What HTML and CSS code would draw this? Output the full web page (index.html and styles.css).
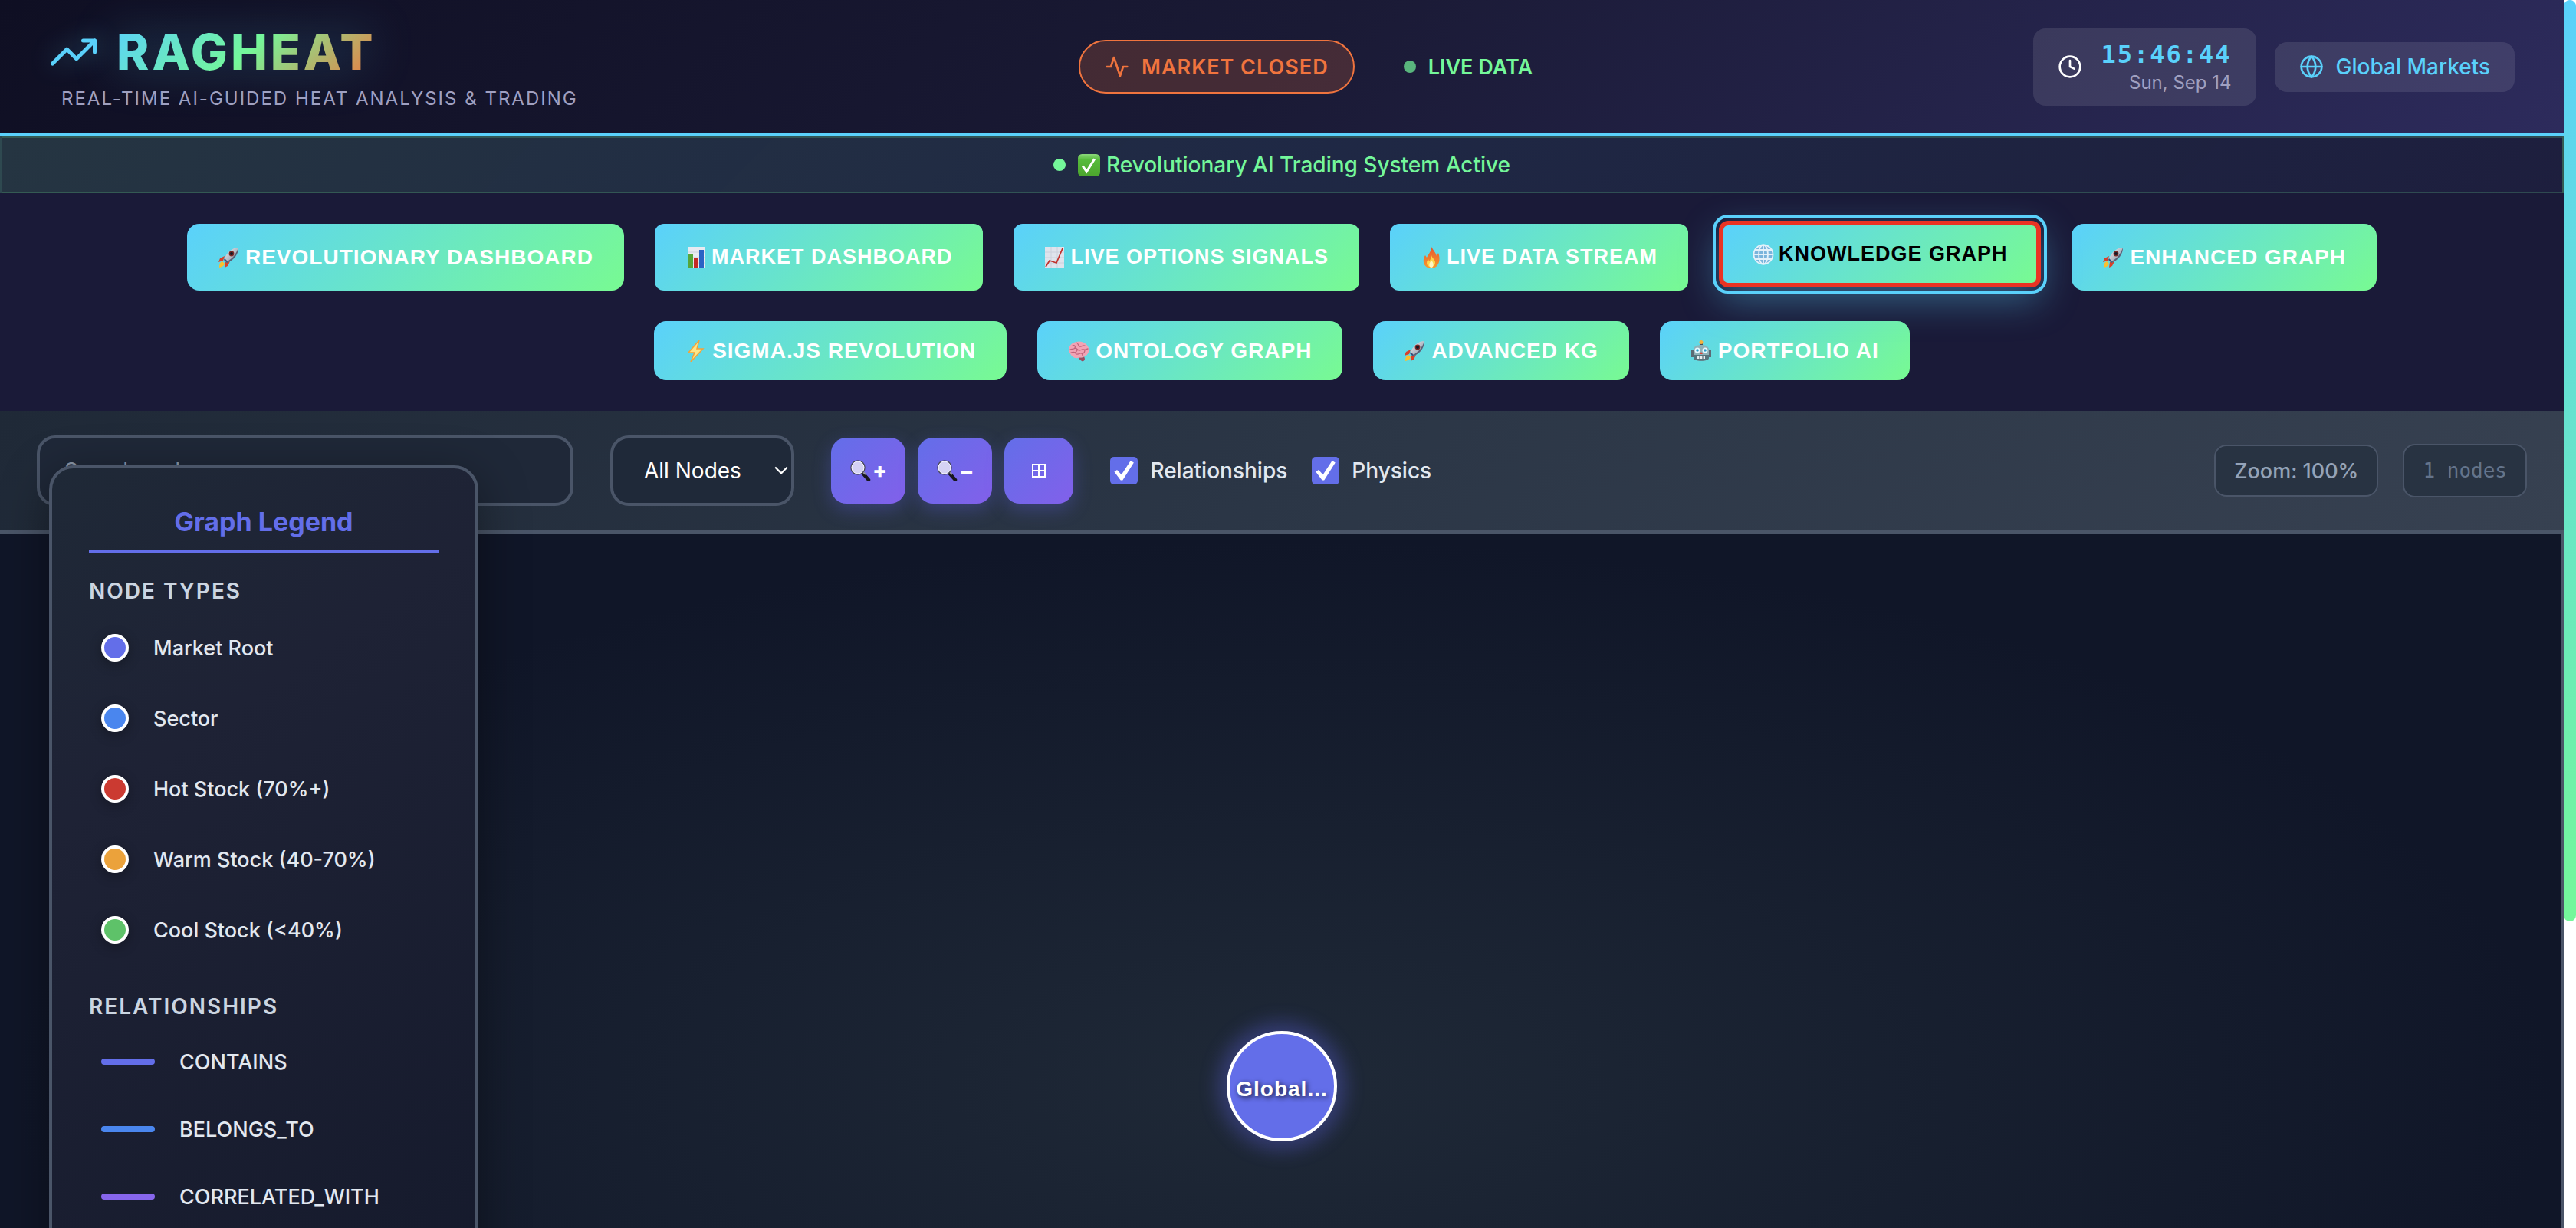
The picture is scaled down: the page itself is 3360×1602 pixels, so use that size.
FILE: index.html
```html
<!DOCTYPE html>
<html lang="en">
<head>
<meta charset="utf-8">
<title>RAGHEAT</title>
<link rel="stylesheet" href="styles.css">
</head>
<body>
<svg class="sprite" aria-hidden="true">
  <linearGradient id="steel" x1="0" y1="0" x2="1" y2="1"><stop offset="0" stop-color="#f4f6fa"/><stop offset="1" stop-color="#7d8797"/></linearGradient>
  <linearGradient id="flame" x1="0" y1="0" x2="0" y2="1"><stop offset="0" stop-color="#e8552b"/><stop offset="1" stop-color="#f79a2d"/></linearGradient>
  <linearGradient id="leaf" x1="0" y1="0" x2="0" y2="1"><stop offset="0" stop-color="#8bd87a"/><stop offset=".25" stop-color="#57bb3c"/><stop offset="1" stop-color="#4ca52d"/></linearGradient>
  <symbol id="rocket" viewBox="0 0 28 28"><path d="M9 12 3 15l-2 5 6-2zM16 19l-3 6-4 2 1-7z" fill="#d8402a"/><path d="M6 19c-3 1-4 4-4 8 4-1 6-2 7-5z" fill="#fbc02d"/><path d="M27 1c-8 0-15 6-19 16l4 4C22 17 27 9 27 1z" fill="url(#steel)"/><path d="M8 17l4 4 2-1-5-5z" fill="#37507c"/><path d="M27 1c0 8-5 16-15 20l-1-1C20 15 24 9 27 1z" fill="#56637a"/><circle cx="18" cy="9" r="3.4" fill="#7a2a26"/><circle cx="18" cy="9" r="2" fill="#151a28"/></symbol>
  <symbol id="bars" viewBox="0 0 28 28"><path d="M3 0h22v28H3z" fill="#e7eaf1"/><path d="M3 7h22M3 14h22M3 21h22" stroke="#cdd2de"/><path d="M4 10h6v18H4z" fill="#56a63a"/><path d="M11 15h6v13h-6z" fill="#c42a25"/><path d="M18 4h6v24h-6z" fill="#2a63c4"/></symbol>
  <symbol id="trend" viewBox="0 0 28 28"><path d="M1 0h25v28H1z" fill="#dfe3ec"/><path d="M1 7h25M1 14h25M1 21h25M9 0v28M17 0v28" stroke="#cbd0dc"/><path d="m2 26 5-8 9 3 8-19" fill="none" stroke="#c1322d" stroke-width="1.8"/></symbol>
  <symbol id="fire" viewBox="0 0 28 28"><path d="M14 0c3 5 6 8 7 12l2-4c4 10 0 20-9 20S1 19 6 11l2 3c2-4 6-8 6-14z" fill="url(#flame)"/><path d="M14 11c1 4 6 6 5 11s-11 6-11-1c0-2 1-4 2-5l1 3c2-2 3-5 3-8z" fill="#fdd54a"/><path d="M14 18c4 3 3 9 0 9s-4-5 0-9z" fill="#fff7c2"/></symbol>
  <symbol id="globe" viewBox="0 0 28 28"><circle cx="14" cy="14" r="12.500" fill="#79b4dc"/><g fill="none" stroke="#e3f1fa" stroke-width="1.800"><circle cx="14" cy="14" r="12.500"/><ellipse cx="14" cy="14" rx="6" ry="12.500"/><path d="M14 1v26M1 14h26M3 8h22M3 20h22"/></g></symbol>
  <symbol id="bolt" viewBox="0 0 28 28"><path d="M19 0 5 16h8L8 28l16-17h-8z" fill="#fde68a" stroke="#f2a33a" stroke-width="1.500"/></symbol>
  <symbol id="brain" viewBox="0 0 28 28"><path d="M13 22c3 0 6 1 8-1l1 3c0 2-2 4-4 3-2-1-3-3-5-5z" fill="#9c4a5e"/><path d="M2 16C-1 10 4 3 11 2c7-2 14 2 16 8 1 5-1 9-5 11-3 2-6 1-9 2-5 1-8-2-11-7z" fill="#f0a3b5"/><path d="M6 7c3-1 4 1 3 3s-4 1-6 2M11 3c3 1 2 4 4 5s4-2 7-1M9 10c3 0 3 3 6 3s3-2 6-1 3-1 5-1M4 16c3-1 5-1 6 1s4 1 6 0 3 1 3 3M12 13c-1 2-2 3-3 3M22 12c0 3-1 5-3 5" fill="none" stroke="#c0637b" stroke-width="1.300" stroke-linecap="round"/></symbol>
  <symbol id="robot" viewBox="0 0 28 28"><path d="M12 3h4v4h-4z" fill="#444d59"/><circle cx="14" cy="2.500" r="2.500" fill="#f5b23c"/><path d="M1 13h3v9H1zM24 13h3v9h-3z" fill="#5c6b75"/><path d="M4 12c0-8 20-8 20 0v11c0 5-20 5-20 0z" fill="#8fb2b8"/><path d="M4 19h20v4c0 5-20 5-20 0z" fill="#56747d"/><circle cx="9" cy="13" r="3.500" fill="#e9f8ff"/><circle cx="19" cy="13" r="3.500" fill="#e9f8ff"/><circle cx="9" cy="13" r="1.800" fill="#2b9ec9"/><circle cx="19" cy="13" r="1.800" fill="#2b9ec9"/><path d="m14 15 2 3h-4z" fill="#d6453c"/><path d="M9 21h10v3H9z" fill="#e8eef0"/><path d="M12 21v3M16 21v3" stroke="#39505a"/></symbol>
  <symbol id="lens" viewBox="0 0 28 28"><path d="m17 17 8 9" stroke="#17171c" stroke-width="4.500" stroke-linecap="round"/><path d="m17 15 4 4" stroke="#9a9aa4" stroke-width="2"/><circle cx="11" cy="10" r="9" fill="#d5d2f4" stroke="#4c4c5c" stroke-width="1.500"/><circle cx="11" cy="10" r="8" fill="none" stroke="#f4f4fb"/></symbol>
</svg>

<div class="app">
  <header class="header">
    <div class="brand">
      <h1 class="logo">
        <svg class="logo-icon" viewBox="0 0 24 24"><path d="m23 6-9.500 9.500-5-5L1 18"/><path d="M17 6h6v6"/></svg>
        <span class="logo-text">RAGHEAT</span>
      </h1>
      <p class="tagline">Real-Time AI-Guided Heat Analysis &amp; Trading</p>
    </div>
    <div class="market">
      <div class="market-pill">
        <svg class="line-icon" viewBox="0 0 24 24"><path d="M22 12h-4l-3 9L9 3l-3 9H2"/></svg>
        <span>MARKET CLOSED</span>
      </div>
      <div class="live"><i class="dot dot-dim"></i><span>LIVE DATA</span></div>
    </div>
    <div class="header-right">
      <div class="clock">
        <svg class="line-icon" viewBox="0 0 24 24"><circle cx="12" cy="12" r="10"/><path d="M12 6v6l4 2"/></svg>
        <div class="clock-text"><time class="time">15:46:44</time><span class="date">Sun, Sep 14</span></div>
      </div>
      <div class="region">
        <svg class="line-icon" viewBox="0 0 24 24"><circle cx="12" cy="12" r="10"/><path d="M2 12h20M12 2a15.300 15.300 0 0 1 4 10 15.300 15.300 0 0 1-4 10 15.300 15.300 0 0 1-4-10 15.300 15.300 0 0 1 4-10z"/></svg>
        <span>Global Markets</span>
      </div>
    </div>
  </header>

  <div class="status" role="status">
    <i class="dot"></i>
    <svg class="check" viewBox="0 0 28 28"><rect width="28" height="28" rx="5" fill="url(#leaf)"/><path d="m6 15 5 7L21 6" fill="none" stroke="#fff" stroke-width="3"/></svg>
    <span>Revolutionary AI Trading System Active</span>
  </div>

  <nav class="nav">
    <button class="tab tab-round"><svg class="emoji"><use href="#rocket"/></svg>Revolutionary Dashboard</button>
    <button class="tab"><svg class="emoji"><use href="#bars"/></svg>Market Dashboard</button>
    <button class="tab"><svg class="emoji"><use href="#trend"/></svg>Live Options Signals</button>
    <button class="tab"><svg class="emoji"><use href="#fire"/></svg>Live Data Stream</button>
    <button class="tab tab-active"><svg class="emoji"><use href="#globe"/></svg>Knowledge Graph</button>
    <button class="tab tab-round"><svg class="emoji"><use href="#rocket"/></svg>Enhanced Graph</button>
    <button class="tab tab-round"><svg class="emoji"><use href="#bolt"/></svg>Sigma.js Revolution</button>
    <button class="tab tab-round"><svg class="emoji"><use href="#brain"/></svg>Ontology Graph</button>
    <button class="tab tab-round"><svg class="emoji"><use href="#rocket"/></svg>Advanced KG</button>
    <button class="tab tab-round"><svg class="emoji"><use href="#robot"/></svg>Portfolio AI</button>
  </nav>

  <main class="graph">
    <div class="toolbar">
      <input class="search" type="text" placeholder="Search nodes..." aria-label="Search nodes">
      <div class="filter">
        <select class="select" aria-label="Node filter"><option>All Nodes</option></select>
        <svg class="chevron" viewBox="0 0 16 10"><path d="m1 1 7 7 7-7"/></svg>
      </div>
      <div class="zoom-buttons">
        <button class="tool" aria-label="Zoom in"><svg class="emoji"><use href="#lens"/></svg>+</button>
        <button class="tool" aria-label="Zoom out"><svg class="emoji"><use href="#lens"/></svg>−</button>
        <button class="tool" aria-label="Fit to view"><svg class="fit" viewBox="0 0 18 18"><path d="M1 1h16v16H1zM9 1v16M1 9h16"/></svg></button>
      </div>
      <div class="toggles">
        <label class="toggle"><input class="tick" type="checkbox" checked>Relationships</label>
        <label class="toggle"><input class="tick" type="checkbox" checked>Physics</label>
      </div>
      <div class="stats">
        <span class="stat">Zoom: 100%</span>
        <span class="stat stat-mono">1 nodes</span>
      </div>
    </div>

    <div class="canvas">
      <div class="node">Global...</div>
    </div>

    <aside class="legend">
      <h2 class="legend-title">Graph Legend</h2>
      <section class="legend-group">
        <h3 class="legend-heading">Node Types</h3>
        <ul class="legend-list">
          <li class="legend-item"><i class="swatch root"></i>Market Root</li>
          <li class="legend-item"><i class="swatch sector"></i>Sector</li>
          <li class="legend-item"><i class="swatch hot"></i>Hot Stock (70%+)</li>
          <li class="legend-item"><i class="swatch warm"></i>Warm Stock (40-70%)</li>
          <li class="legend-item"><i class="swatch cool"></i>Cool Stock (&lt;40%)</li>
        </ul>
      </section>
      <section class="legend-group">
        <h3 class="legend-heading">Relationships</h3>
        <ul class="legend-list">
          <li class="legend-item edge-item"><i class="edge root"></i>CONTAINS</li>
          <li class="legend-item edge-item"><i class="edge sector"></i>BELONGS_TO</li>
          <li class="legend-item edge-item"><i class="edge correlated"></i>CORRELATED_WITH</li>
        </ul>
      </section>
    </aside>
  </main>
</div>
<div class="scrollbar"><div class="thumb"></div></div>
</body>
</html>
```
FILE: styles.css
```css
* { box-sizing: border-box; }

body {
  margin: 0;
  display: flex;
  height: 100vh;
  overflow: hidden;
  background: #1a1a35;
  color: #fff;
  font-family: Inter, "Liberation Sans", sans-serif;
  font-size: 28px;
}

h1, h2, h3, p, ul { margin: 0; padding: 0; }
ul { list-style: none; }
button, input, select { font-family: inherit; margin: 0; }

.sprite { position: absolute; width: 0; height: 0; }
.app { flex: 1; min-width: 0; overflow: hidden; }

/* Header */
.header {
  display: flex;
  align-items: center;
  justify-content: space-between;
  height: 178px;
  padding: 0 64px;
  border-bottom: 4px solid #5ad1fb;
  background: linear-gradient(135deg, #0f0f23 0%, #1a1a35 50%, #2d2b5c 100%);
}
.brand { display: flex; flex-direction: column; gap: 8px; }
.logo {
  display: flex;
  align-items: center;
  gap: 24px;
  font-size: 64px;
  line-height: 76px;
  font-weight: 800;
  letter-spacing: 4px;
}
.logo-icon {
  width: 60px;
  height: 60px;
  margin: 0 2px;
  fill: none;
  stroke: #5ad1fb;
  stroke-width: 2;
  stroke-linecap: round;
  stroke-linejoin: round;
  filter: drop-shadow(0 0 16px rgba(90, 209, 251, .4));
}
.logo-text {
  background: linear-gradient(135deg, #5ad1fb, #74f79a 50%, #f0743e);
  -webkit-background-clip: text;
  background-clip: text;
  color: transparent;
  filter: drop-shadow(0 0 30px rgba(90, 209, 251, .3));
}
.tagline {
  padding-left: 16px;
  color: #a0a0c0;
  font-size: 24px;
  line-height: 30px;
  letter-spacing: 2px;
  text-transform: uppercase;
}
.line-icon {
  width: 32px;
  height: 32px;
  fill: none;
  stroke: currentColor;
  stroke-width: 2;
  stroke-linecap: round;
  stroke-linejoin: round;
}
.market { display: flex; align-items: center; gap: 64px; font-size: 27px; }
.market-pill {
  display: flex;
  align-items: center;
  gap: 16px;
  height: 70px;
  padding: 0 32px;
  border: 2px solid #f0743e;
  border-radius: 35px;
  background: rgba(240, 116, 62, .2);
  color: #f0743e;
  font-weight: 600;
  letter-spacing: 1px;
}
.live { display: flex; align-items: center; gap: 16px; color: #74f79a; font-weight: 600; }
.dot { width: 16px; height: 16px; border-radius: 50%; background: #74f79a; }
.dot-dim { opacity: .7; }
.header-right { display: flex; align-items: center; gap: 24px; }
.clock, .region {
  display: flex;
  align-items: center;
  padding: 0 32px;
  border-radius: 16px;
  background: rgba(255, 255, 255, .1);
}
.clock { gap: 24px; height: 101px; }
.clock-text { display: flex; flex-direction: column; align-items: flex-end; }
.time {
  color: #5ad1fb;
  font-family: "DejaVu Sans Mono", monospace;
  font-size: 32px;
  line-height: 42px;
  font-weight: 700;
  letter-spacing: 2px;
}
.date { color: #a0a0c0; font-size: 24px; line-height: 32px; }
.region { gap: 16px; height: 65px; color: #5ad1fb; font-weight: 500; }

/* Status line */
.status {
  display: flex;
  align-items: center;
  justify-content: center;
  height: 74px;
  border: 2px solid rgba(116, 247, 154, .2);
  background: linear-gradient(135deg, rgba(116, 247, 154, .12), rgba(90, 209, 251, .08) 50%, rgba(90, 110, 200, .06));
  color: #74f79a;
  font-weight: 500;
  gap: 8px;
}
.status .dot { margin-right: 8px; }
.check { width: 29px; height: 29px; }

/* Tabs */
.nav {
  display: flex;
  flex-wrap: wrap;
  justify-content: center;
  gap: 40px;
  padding: 40px 64px;
  background: #1a1a38;
}
.tab {
  display: flex;
  align-items: center;
  justify-content: center;
  gap: 6px;
  min-height: 77px;
  padding: 0 40px;
  border: 0;
  border-radius: 12px;
  background: linear-gradient(135deg, #5ad1fb, #78fa92);
  color: #fff;
  font-family: "Liberation Sans", Arial, sans-serif;
  font-size: 27px;
  font-weight: 700;
  letter-spacing: 1px;
  text-transform: uppercase;
}
.tab-round { gap: 8px; border-radius: 16px; font-size: 28px; }
.tab-active {
  position: relative;
  top: -4px;
  height: 87px;
  padding: 0 38px;
  border: 6px solid #ea3323;
  outline: 4px solid #5ad1fb;
  outline-offset: 4px;
  color: #000;
  box-shadow: 0 16px 50px rgba(90, 209, 251, .4);
}
.emoji { width: 28px; height: 28px; flex: none; }

/* Toolbar */
.graph { position: relative; }
.toolbar {
  display: flex;
  align-items: center;
  gap: 48px;
  height: 160px;
  padding: 0 48px;
  border-bottom: 4px solid #4a5568;
  background: linear-gradient(135deg, #1f2937, #2b3646 50%, #374151);
}
.search {
  width: 700px;
  height: 92px;
  padding: 0 32px;
  border: 4px solid #4a5568;
  border-radius: 24px;
  background: #1f2838;
  color: #fff;
  font-size: 28px;
}
.search::placeholder { color: #8b97a8; }
.filter { display: grid; align-items: center; width: 240px; }
.filter > * { grid-area: 1 / 1; }
.select {
  width: 100%;
  height: 92px;
  padding: 0 40px;
  border: 4px solid #4a5568;
  border-radius: 24px;
  background: #1f2939;
  color: #fff;
  font-size: 28px;
  appearance: none;
}
.chevron {
  justify-self: end;
  width: 18px;
  height: 12px;
  margin-right: 8px;
  fill: none;
  stroke: #fff;
  stroke-width: 2;
  pointer-events: none;
}
.zoom-buttons { display: flex; gap: 16px; }
.tool {
  display: flex;
  align-items: center;
  justify-content: center;
  gap: 2px;
  min-width: 90px;
  height: 86px;
  padding: 0 24px;
  border: 0;
  border-radius: 20px;
  background: linear-gradient(135deg, #636ee9, #8260ea);
  box-shadow: 0 8px 24px rgba(99, 102, 241, .3);
  color: #fff;
  font-size: 28px;
  font-weight: 800;
}
.fit { width: 18px; height: 18px; fill: none; stroke: #fff; stroke-width: 2; }
.toggles { display: flex; gap: 32px; }
.toggle { display: flex; align-items: center; gap: 16px; color: #e2e8f0; font-weight: 500; }
.tick {
  appearance: none;
  width: 36px;
  height: 36px;
  border-radius: 5px;
  background: #636ee9;
  display: grid;
  place-items: center;
}
.tick:checked::before {
  content: "";
  width: 26px;
  height: 26px;
  background: #fff;
  clip-path: polygon(0 56%, 14% 46%, 36% 70%, 82% 0, 98% 10%, 42% 98%, 32% 98%);
}
.stats { display: flex; align-items: center; gap: 32px; margin-left: auto; }
.stat {
  display: flex;
  align-items: center;
  height: 68px;
  padding: 0 24px;
  border: 2px solid #4a5568;
  border-radius: 16px;
  background: #283342;
  color: #94a3b8;
  font-size: 27px;
  font-weight: 500;
}
.stat-mono {
  height: 70px;
  color: #64748b;
  font-family: "DejaVu Sans Mono", monospace;
  font-size: 26px;
  font-weight: 400;
}

/* Graph canvas */
.canvas {
  display: grid;
  place-items: center;
  height: 90vh;
  background: radial-gradient(ellipse at center, #1f2937 0%, #101628 70%);
  box-shadow: inset -4px 0 #4a5568;
}
.node {
  display: grid;
  place-items: center;
  width: 144px;
  height: 144px;
  padding-top: 8px;
  border: 4px solid #fff;
  border-radius: 50%;
  background: #636ee9;
  box-shadow: 0 0 24px 12px rgba(99, 102, 241, .32);
  font-family: "Liberation Sans", Arial, sans-serif;
  font-size: 28px;
  font-weight: 700;
  letter-spacing: 1px;
  text-shadow: 2px 2px 6px rgba(0, 0, 0, .8);
}

/* Legend floats over the toolbar and the canvas */
.legend {
  position: absolute;
  top: 71px;
  left: 64px;
  width: 560px;
  height: 1200px;
  padding: 48px;
  border: 4px solid #4a5568;
  border-radius: 32px;
  background: linear-gradient(145deg, #1f2937, #1e2235 30%, #14192b);
  box-shadow: 0 16px 64px rgba(0, 0, 0, .4);
}
.legend-title {
  padding-bottom: 14px;
  border-bottom: 4px solid #636ee9;
  color: #636ee9;
  font-size: 34px;
  line-height: 44px;
  font-weight: 700;
  text-align: center;
}
.legend-group { padding-top: 32px; }
.legend-group + .legend-group { padding-top: 36px; }
.legend-heading {
  margin-bottom: 10px;
  color: #cbd5e1;
  font-size: 28px;
  line-height: 36px;
  font-weight: 600;
  letter-spacing: 2px;
  text-transform: uppercase;
}
.legend-item {
  display: flex;
  align-items: center;
  gap: 32px;
  height: 92px;
  padding: 0 16px;
  color: #e2e8f0;
  font-size: 27px;
  font-weight: 500;
}
.edge-item { height: 88px; }
.swatch {
  width: 36px;
  height: 36px;
  border: 4px solid #fff;
  border-radius: 50%;
  box-shadow: 0 4px 16px rgba(0, 0, 0, .3);
}
.edge { width: 70px; height: 8px; border-radius: 4px; }
.root { background: #636ee9; }
.sector { background: #4a86ee; }
.hot { background: #cb3a31; }
.warm { background: #eba23b; }
.cool { background: #5ec269; }
.correlated { background: #8766ec; }

/* Page scrollbar */
.scrollbar { width: 16px; background: #fff; }
.thumb { height: 75%; border-radius: 8px; background: linear-gradient(#5ad1fb, #74f79a); }
```
